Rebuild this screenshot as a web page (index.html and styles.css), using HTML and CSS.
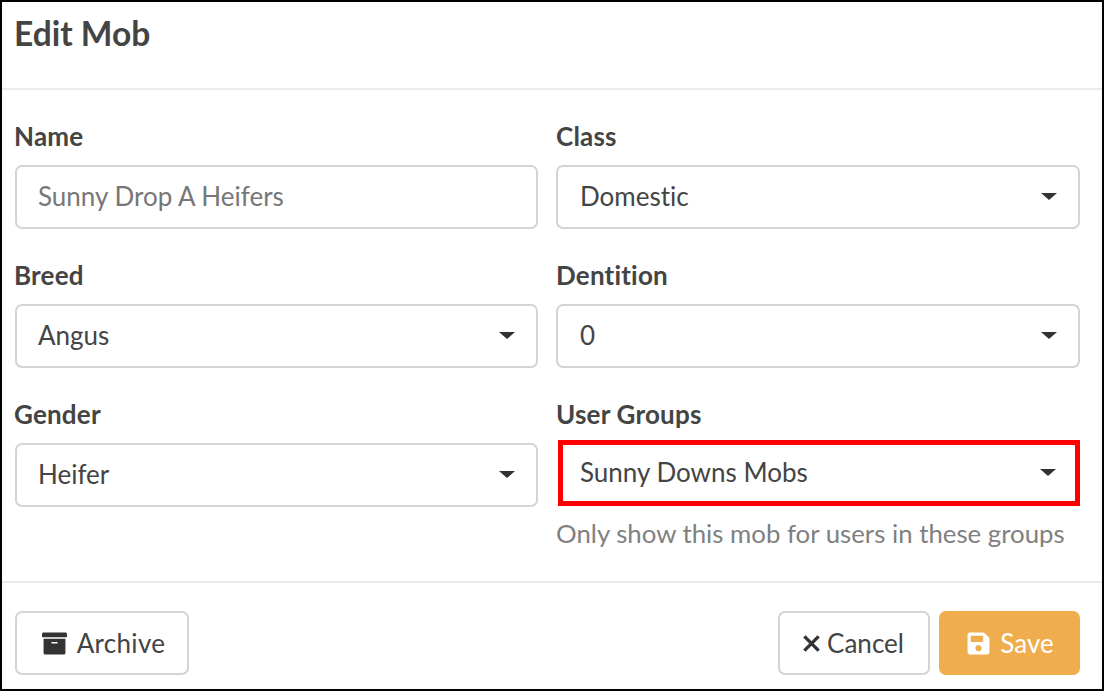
FILE: index.html
```html
<!DOCTYPE html>
<html lang="en">
<head>
<meta charset="utf-8">
<title>Edit Mob</title>
<link rel="stylesheet" href="styles.css">
</head>
<body>
<div class="modal">
  <header class="modal-header"><h1 class="title">Edit Mob</h1></header>
  <main class="modal-body">
    <div class="field">
      <label class="label">Name</label>
      <div class="control"><span class="value muted">Sunny Drop A Heifers</span></div>
    </div>
    <div class="field">
      <label class="label">Class</label>
      <div class="control"><span class="value">Domestic</span><span class="caret"></span></div>
    </div>
    <div class="field">
      <label class="label">Breed</label>
      <div class="control"><span class="value">Angus</span><span class="caret"></span></div>
    </div>
    <div class="field">
      <label class="label">Dentition</label>
      <div class="control"><span class="value">0</span><span class="caret"></span></div>
    </div>
    <div class="field">
      <label class="label">Gender</label>
      <div class="control"><span class="value">Heifer</span><span class="caret"></span></div>
    </div>
    <div class="field">
      <label class="label">User Groups</label>
      <div class="control highlighted"><span class="value">Sunny Downs Mobs</span><span class="caret"></span></div>
      <p class="help">Only show this mob for users in these groups</p>
    </div>
  </main>
  <footer class="modal-footer">
    <button class="btn archive" type="button">
      <svg class="icon" viewBox="0 0 512 512" aria-hidden="true"><path fill="#333" d="M32 448c0 17.700 14.300 32 32 32h384c17.700 0 32-14.300 32-32V160H32v288zm160-212c0-6.600 5.400-12 12-12h104c6.600 0 12 5.400 12 12v8c0 6.600-5.400 12-12 12H204c-6.600 0-12-5.400-12-12v-8zM480 32H32C14.300 32 0 46.300 0 64v48c0 8.800 7.200 16 16 16h480c8.800 0 16-7.200 16-16V64c0-17.700-14.300-32-32-32z"/></svg>
      <span>Archive</span>
    </button>
    <div class="actions">
      <button class="btn cancel" type="button">
        <svg class="icon-x" viewBox="0 0 16 16" aria-hidden="true"><path d="M2 2l12 12M14 2L2 14" stroke="#333" stroke-width="2.800" fill="none"/></svg>
        <span>Cancel</span>
      </button>
      <button class="btn save" type="button">
        <svg class="icon" viewBox="0 0 448 512" aria-hidden="true"><path fill="#fff" d="M433.900 129.900l-83.900-83.900A48 48 0 0 0 316.100 32H48C21.500 32 0 53.500 0 80v352c0 26.500 21.500 48 48 48h352c26.500 0 48-21.500 48-48V163.900a48 48 0 0 0-14.100-34zM224 416c-35.300 0-64-28.700-64-64 0-35.300 28.700-64 64-64s64 28.700 64 64c0 35.300-28.700 64-64 64zm96-304.500V212c0 6.600-5.400 12-12 12H76c-6.600 0-12-5.400-12-12V108c0-6.600 5.400-12 12-12h228.500c3.200 0 6.200 1.300 8.500 3.500l3.500 3.500c2.200 2.200 3.500 5.300 3.500 8.500z"/></svg>
        <span>Save</span>
      </button>
    </div>
  </footer>
</div>
</body>
</html>
```
FILE: styles.css
```css
* { box-sizing: border-box; }
html, body { margin: 0; padding: 0; }
body {
  width: 1104px;
  height: 691px;
  background: #fff;
  font-family: Lato, "Open Sans", sans-serif;
  font-variant-ligatures: none;
  color: #333;
}
.modal {
  width: 1104px;
  height: 691px;
  border: 2px solid #000;
  display: flex;
  flex-direction: column;
}
.modal-header {
  height: 88px;
  padding: 12px 12px 0;
  border-bottom: 2px solid #ececec;
}
.title {
  margin: 0;
  font-size: 33.500px;
  line-height: 38px;
  font-weight: 700;
  color: #444;
}
.modal-body {
  height: 491px;
  padding: 32px 23px 0 13px;
  display: grid;
  grid-template-columns: 523px 524px;
  column-gap: 18px;
  grid-auto-rows: 139px;
}
.field { display: flex; flex-direction: column; }
.label {
  flex: none;
  font-size: 26px;
  line-height: 28px;
  font-weight: 700;
  color: #444;
  height: 43px;
  margin-left: -1px;
  letter-spacing: 0.2px;
}
.field:nth-child(even) .label { margin-left: 0; }
.control {
  flex: none;
  height: 64px;
  border: 2px solid #d4d4d4;
  border-radius: 7px;
  padding: 0 22px 0 21px;
  display: flex;
  align-items: center;
  justify-content: space-between;
  background: #fff;
}
.field:nth-child(even) .control { padding-left: 22px; }
.value {
  font-size: 26px;
  line-height: 30px;
  padding-bottom: 3px;
  color: #444;
}
.value.muted { color: #777; }
.caret {
  width: 0;
  height: 0;
  border-left: 8px solid transparent;
  border-right: 8px solid transparent;
  border-top: 7px solid #333;
  margin-right: -1px;
  margin-bottom: 2px;
}
.field:nth-child(even) .highlighted {
  margin: -3px 0 -1px 2px;
  width: 522px;
  height: 66px;
  border: 5px solid #f00;
  border-radius: 0;
  padding: 1px 20px 0 17px;
}
.help {
  flex: none;
  margin: 13px 0 0;
  font-size: 25.800px;
  line-height: 30px;
  color: #808080;
}
.modal-footer {
  flex: 1;
  border-top: 2px solid #ececec;
  padding: 28px 22px 0 13px;
  display: flex;
  justify-content: space-between;
  align-items: flex-start;
}
.actions { display: flex; gap: 9px; }
.btn {
  height: 64px;
  border: 2px solid #d4d4d4;
  border-radius: 7px;
  background: #fff;
  font-family: inherit;
  font-size: 26px;
  color: #444;
  display: flex;
  align-items: center;
  justify-content: center;
  padding: 0;
}
.archive { width: 174px; gap: 10px; padding-left: 3px; letter-spacing: 0.3px; }
.cancel { width: 152px; gap: 6px; padding-right: 2px; }
.save {
  width: 141px;
  gap: 9px;
  padding-left: 1px;
  background: #f0ad4e;
  border-color: #f0ad4e;
  color: #fff;
}
.icon { width: 25px; height: 25px; flex: none; }
.icon-x { width: 19px; height: 19px; flex: none; }
```
